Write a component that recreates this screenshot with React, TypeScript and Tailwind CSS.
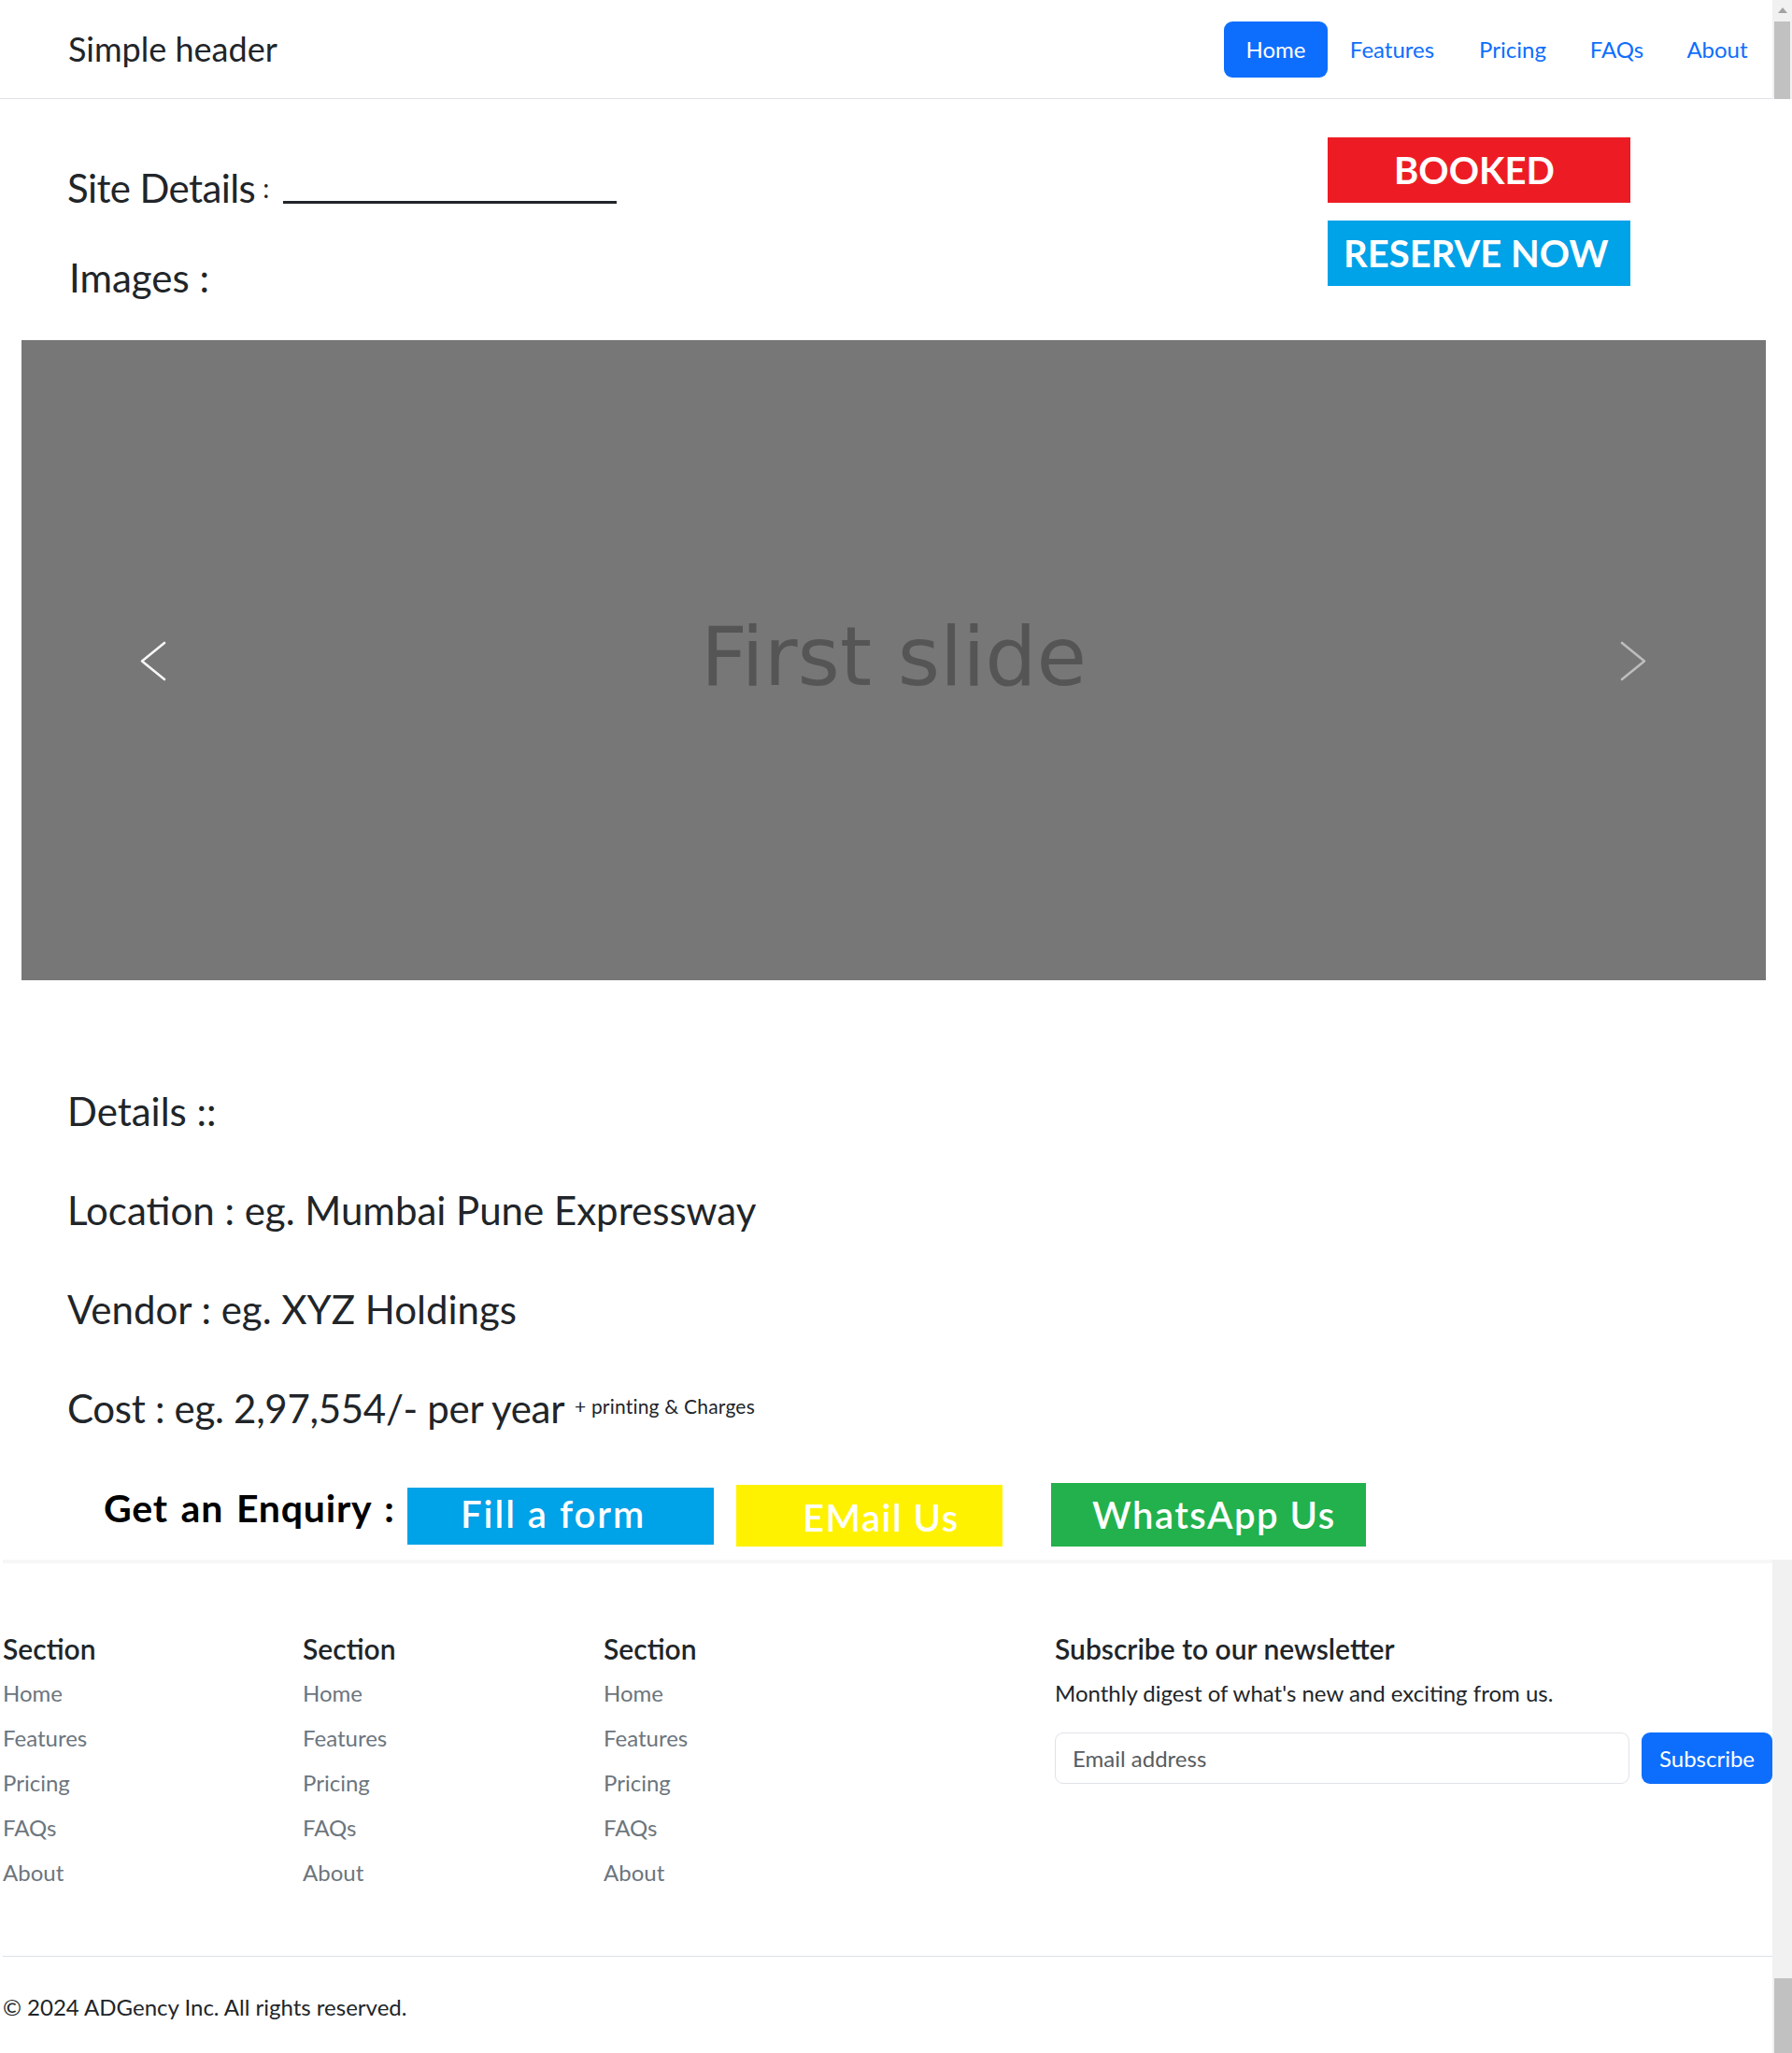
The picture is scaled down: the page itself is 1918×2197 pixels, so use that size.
import React from "react";

const navLinks = [
  { label: "Home", w: "w-[111px]" },
  { label: "Features", w: "w-[138px]" },
  { label: "Pricing", w: "w-[120px]" },
  { label: "FAQs", w: "w-[103px]" },
  { label: "About", w: "w-[112px]" },
];
const footerLinks = ["Home", "Features", "Pricing", "FAQs", "About"];

function Chevron({ dir, color }: { dir: "left" | "right"; color: string }) {
  const pts = dir === "left" ? "26,2 2,21.5 26,41" : "2,2 26,21.5 2,41";
  return (
    <svg width="28" height="43" viewBox="0 0 28 43" fill="none">
      <polyline
        points={pts}
        stroke={color}
        strokeWidth="2.6"
        strokeLinecap="round"
        strokeLinejoin="round"
      />
    </svg>
  );
}

function FooterColumn() {
  return (
    <div>
      <h5 className="mb-[12px] text-[30px] font-semibold leading-[36px] text-[#212529]">Section</h5>
      <ul>
        {footerLinks.map((l) => (
          <li key={l} className="mb-[12px] text-[24px] leading-[36px] text-[#6c757d]">
            <a href="#">{l}</a>
          </li>
        ))}
      </ul>
    </div>
  );
}

export default function App() {
  return (
    <div className="w-[1918px] bg-white font-['Lato',sans-serif] text-[#212529]">
      {/* header */}
      <header className="flex h-[106px]">
        <div className="flex w-[1897px] items-center justify-between border-b border-[#dee2e6] pl-[73px] pr-[3px]">
          <span className="text-[36px] leading-[43px] text-[#212529]">Simple header</span>
          <nav className="flex">
            {navLinks.map((l, i) => (
              <a
                key={l.label}
                href="#"
                className={
                  i === 0
                    ? `${l.w} rounded-[9px] bg-[#0d6efd] py-3 text-center text-[24px] leading-[36px] text-white`
                    : `${l.w} py-3 text-center text-[24px] leading-[36px] text-[#0d6efd]`
                }
              >
                {l.label}
              </a>
            ))}
          </nav>
        </div>
        <div className="flex w-[21px] flex-col items-center bg-[#f1f1f1]">
          <div className="mt-[8px] h-0 w-0 border-x-[5px] border-b-[6px] border-x-transparent border-b-[#a3a3a3]" />
          <div className="mt-[9px] w-[17px] flex-1 bg-[#c1c1c1]" />
        </div>
      </header>

      <main className="w-[1897px]">
        {/* title + status */}
        <div className="flex justify-between pt-[41px]">
          <div className="pl-[72px] pt-[29px] text-[42px] leading-[50px]">
            <div className="whitespace-nowrap">
              <span className="tracking-[-0.6px]">Site Details</span>
              <span className="ml-[8px] text-[28px] leading-none align-[5px]">:</span>
              <span className="ml-[15px] inline-block h-0 w-[357px] border-b-[3px] border-[#212529] align-[-1px]" />
            </div>
            <div className="mt-[46px] pl-[2px]">Images :</div>
          </div>
          <div className="mr-[152px] flex flex-col gap-[19px]">
            <div className="h-[70px] w-[324px] bg-[#ed1c24] pl-[71px] pt-[11px] text-[40px] font-bold leading-[48px] text-white">
              BOOKED
            </div>
            <div className="h-[70px] w-[324px] bg-[#00a2e8] pl-[17px] pt-[11px] text-[40px] font-bold leading-[48px] text-white">
              RESERVE NOW
            </div>
          </div>
        </div>

        {/* carousel */}
        <div className="relative ml-[23px] mt-[42px] flex h-[685px] w-[1867px] items-center justify-center bg-[#777777]">
          <span className="pb-[7px] font-['DejaVu_Sans',sans-serif] text-[87px] leading-[87px] text-[#555555]">
            First slide
          </span>
          <div className="absolute left-[127px] top-[322px]">
            <Chevron dir="left" color="#f6f6f6" />
          </div>
          <div className="absolute left-[1711px] top-[322px]">
            <Chevron dir="right" color="#bdbdbd" />
          </div>
        </div>

        {/* details */}
        <div className="mt-[87px] pl-[72px] text-[42px] leading-[106px]">
          <div>Details ::</div>
          <div>Location : eg. Mumbai Pune Expressway</div>
          <div>Vendor : eg. XYZ Holdings</div>
          <div>
            <span className="tracking-[-0.3px]">Cost : eg. 2,97,554/- per year</span>{" "}
            <span className="text-[21px] leading-none tracking-[0.2px] align-[10px]">+ printing &amp; Charges</span>
          </div>
        </div>

        {/* enquiry */}
        <div className="mt-[27px] flex h-[68px] items-start pl-[111px]">
          <span className="mt-[3px] w-[325px] whitespace-nowrap text-[41px] font-bold leading-[48px] tracking-[0.8px] text-black [word-spacing:3px]">
            Get an Enquiry :
          </span>
          <div className="mt-[5px] h-[61px] w-[328px] whitespace-nowrap bg-[#00a2e8] pl-[57px] pt-[4px] text-[40px] font-semibold leading-[48px] tracking-[2px] text-white">
            Fill a form
          </div>
          <div className="ml-[24px] mt-[2px] h-[66px] w-[285px] whitespace-nowrap bg-[#fff200] pl-[71px] pt-[11px] text-[40px] font-semibold leading-[48px] tracking-[1.5px] text-white">
            EMail Us
          </div>
          <div className="ml-[52px] h-[68px] w-[337px] whitespace-nowrap bg-[#22b14c] pl-[44px] pt-[10px] text-[40px] font-semibold leading-[48px] tracking-[1.5px] text-white">
            WhatsApp Us
          </div>
        </div>
      </main>

      {/* footer */}
      <footer className="mt-[14px] flex h-[528px]">
        <div className="w-[1897px]">
          <div className="ml-[3px] h-[4px] bg-[#f7f7f7]" />
          <div className="flex pl-[3px] pt-[73px]">
            <div className="w-[321px]">
              <FooterColumn />
            </div>
            <div className="w-[322px]">
              <FooterColumn />
            </div>
            <div className="w-[483px]">
              <FooterColumn />
            </div>
            <div className="w-[768px]">
              <h5 className="mb-[12px] text-[30px] font-semibold leading-[36px] text-[#212529]">
                Subscribe to our newsletter
              </h5>
              <p className="mb-[24px] text-[24px] leading-[36px] text-[#212529]">
                Monthly digest of what's new and exciting from us.
              </p>
              <div className="flex gap-[13px]">
                <input
                  type="text"
                  placeholder="Email address"
                  className="h-[55px] w-[615px] rounded-[9px] border border-[#dee2e6] px-[18px] text-[24px] text-[#212529] placeholder:text-[#595c5f]"
                />
                <button className="h-[55px] w-[140px] rounded-[9px] bg-[#0d6efd] text-[24px] text-white">
                  Subscribe
                </button>
              </div>
            </div>
          </div>
          <div className="ml-[3px] mt-[59px] border-t border-[#dee2e6] pt-[36px] text-[24px] leading-[36px] text-[#212529]">
            © 2024 ADGency Inc. All rights reserved.
          </div>
        </div>
        <div className="flex w-[21px] flex-col justify-end bg-[#f1f1f1]">
          <div className="ml-[2px] h-[80px] bg-[#c1c1c1]" />
        </div>
      </footer>
    </div>
  );
}
